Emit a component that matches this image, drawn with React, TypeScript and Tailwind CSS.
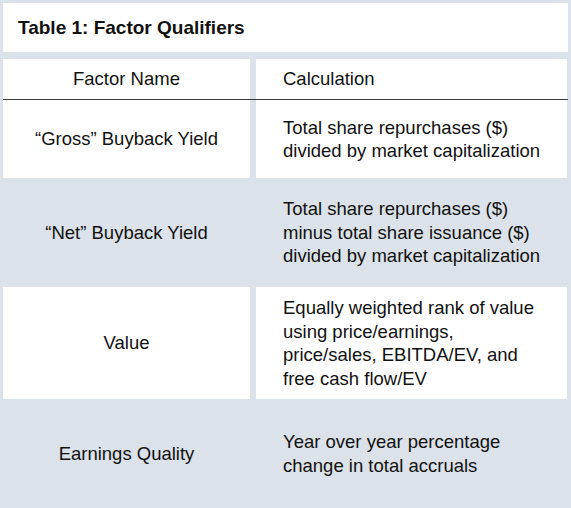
import React from "react";

const rows = [
  { name: "\u201CGross\u201D Buyback Yield", calc: ["Total share repurchases ($)", "divided by market capitalization"], white: true, h: "h-[78px]" },
  { name: "\u201CNet\u201D Buyback Yield", calc: ["Total share repurchases ($)", "minus total share issuance ($)", "divided by market capitalization"], white: false, h: "h-[109px]" },
  { name: "Value", calc: ["Equally weighted rank of value", "using price/earnings,", "price/sales, EBITDA/EV, and", "free cash flow/EV"], white: true, h: "h-[112px]" },
  { name: "Earnings Quality", calc: ["Year over year percentage", "change in total accruals"], white: false, h: "h-[109px]" },
];

export default function App() {
  return (
    <div className="w-[571px] h-[508px] overflow-hidden bg-[#dbe2e9] p-[3px] pb-0 font-['Liberation_Sans',Arial,sans-serif] text-[#111]">
      <div className="h-[49px] bg-white flex items-center pl-[15px] pt-[1px] text-[19px] font-bold">
        Table 1: Factor Qualifiers
      </div>

      <div className="mt-[7px] grid grid-cols-[247px_311px] gap-x-[6px] h-[41px] border-b border-[#3a3a3a] text-[18.5px]">
        <div className="bg-white flex items-center justify-center">Factor Name</div>
        <div className="bg-white flex items-center pl-[27px]">Calculation</div>
      </div>

      {rows.map((r, i) => (
        <div key={i} className={`grid grid-cols-[247px_311px] gap-x-[6px] ${r.h} text-[18.5px] leading-[23.5px]`}>
          <div className={`${r.white ? "bg-white" : ""} flex items-center justify-center whitespace-nowrap`}>{r.name}</div>
          <div className={`${r.white ? "bg-white" : ""} flex flex-col justify-center pl-[27px] whitespace-nowrap`}>
            {r.calc.map((line, j) => (
              <span key={j}>{line}</span>
            ))}
          </div>
        </div>
      ))}
    </div>
  );
}
